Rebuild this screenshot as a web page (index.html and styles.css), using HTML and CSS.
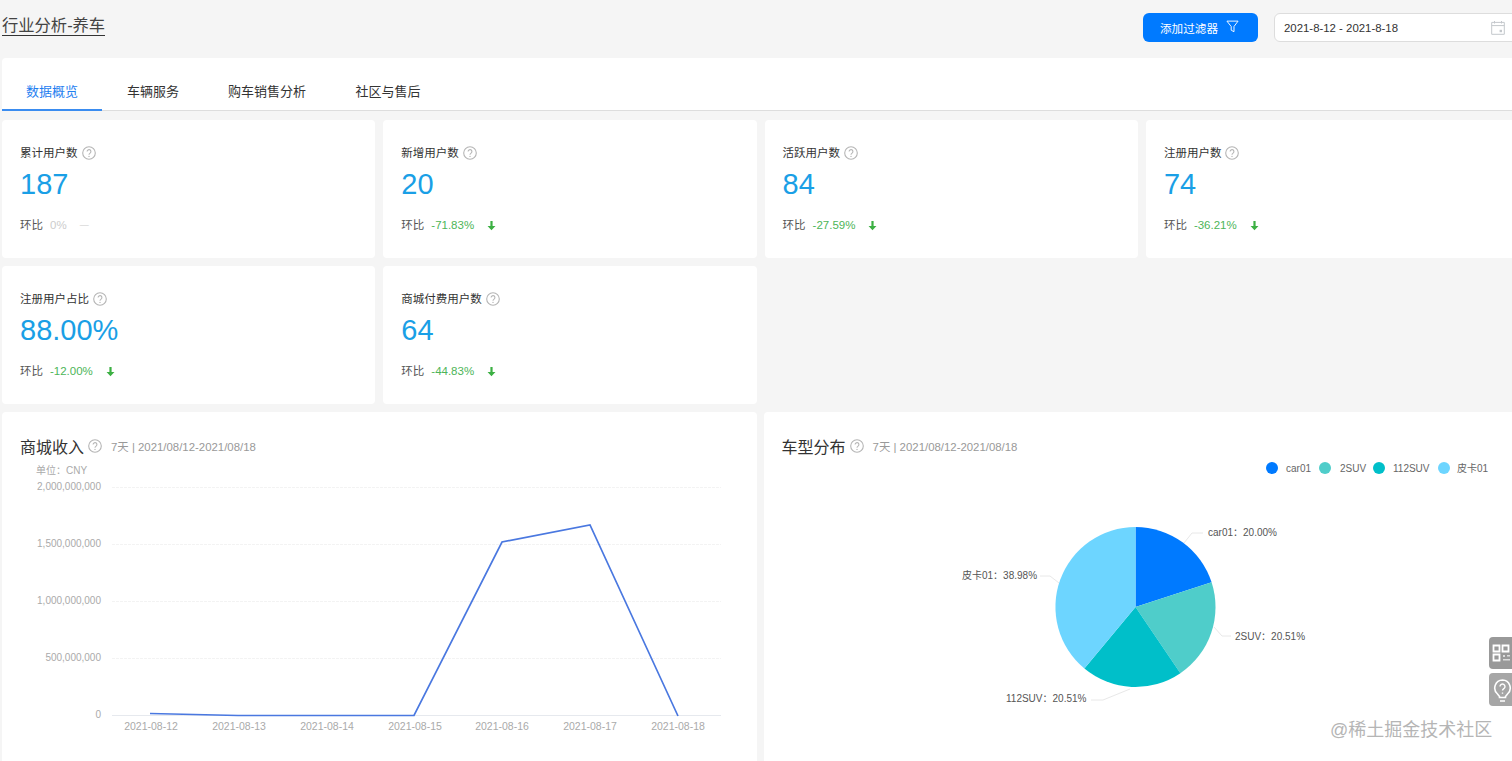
FILE: index.html
```html
<!DOCTYPE html>
<html lang="zh-CN">
<head>
<meta charset="utf-8">
<title>行业分析-养车</title>
<link rel="stylesheet" href="styles.css">
</head>
<body>
<svg class="defs" width="0" height="0" aria-hidden="true">
  <symbol id="q" viewBox="0 0 14 14">
    <circle cx="7" cy="7" r="6.3" fill="none" stroke="currentColor" stroke-width="1.100"/>
    <path d="M5.100 5.600a1.900 1.900 0 1 1 3 1.500c-.7.500-1.100.9-1.100 1.600" fill="none" stroke="currentColor" stroke-width="1.100"/>
    <circle cx="7" cy="10.400" r=".7" fill="currentColor"/>
  </symbol>
  <symbol id="down" viewBox="0 0 10 10">
    <path d="M4 1h2v4.400h2.600L5 9.400 1.400 5.400H4z" fill="currentColor"/>
  </symbol>
</svg>
<div class="page">
  <header class="top">
    <h1 class="title">行业分析-养车</h1>
    <div class="actions">
      <button class="filter-btn">添加过滤器
        <svg class="filter-icon" viewBox="0 0 14 14"><path d="M1 1.200h12L8.600 7v5.600L5.600 11V7z" fill="none" stroke="currentColor" stroke-width="1"/></svg>
      </button>
      <div class="date">
        <span>2021-8-12 - 2021-8-18</span>
        <svg class="cal" viewBox="0 0 14 15"><path d="M3.500 1v2.500M10.500 1v2.500M.7 2.400h12.600v11.900H.7zM.7 5.600h12.600" fill="none" stroke="currentColor" stroke-width="1"/><rect x="8.600" y="9.800" width="2.400" height="2.400" fill="currentColor"/></svg>
      </div>
    </div>
  </header>

  <nav class="tabs">
    <a class="tab active">数据概览</a>
    <a class="tab">车辆服务</a>
    <a class="tab">购车销售分析</a>
    <a class="tab">社区与售后</a>
  </nav>

  <main class="grid">
    <section class="card">
      <div class="label">累计用户数 <svg class="q"><use href="#q"/></svg></div>
      <div class="value">187</div>
      <div class="trend">环比<span class="flat">0%</span><span class="flat dash">—</span></div>
    </section>
    <section class="card">
      <div class="label">新增用户数 <svg class="q"><use href="#q"/></svg></div>
      <div class="value">20</div>
      <div class="trend">环比<span class="delta">-71.83%</span><svg class="down"><use href="#down"/></svg></div>
    </section>
    <section class="card">
      <div class="label">活跃用户数 <svg class="q"><use href="#q"/></svg></div>
      <div class="value">84</div>
      <div class="trend">环比<span class="delta">-27.59%</span><svg class="down"><use href="#down"/></svg></div>
    </section>
    <section class="card">
      <div class="label">注册用户数 <svg class="q"><use href="#q"/></svg></div>
      <div class="value">74</div>
      <div class="trend">环比<span class="delta">-36.21%</span><svg class="down"><use href="#down"/></svg></div>
    </section>
    <section class="card">
      <div class="label">注册用户占比 <svg class="q"><use href="#q"/></svg></div>
      <div class="value">88.00%</div>
      <div class="trend">环比<span class="delta">-12.00%</span><svg class="down"><use href="#down"/></svg></div>
    </section>
    <section class="card">
      <div class="label">商城付费用户数 <svg class="q"><use href="#q"/></svg></div>
      <div class="value">64</div>
      <div class="trend">环比<span class="delta">-44.83%</span><svg class="down"><use href="#down"/></svg></div>
    </section>

    <section class="panel panel-left">
      <div class="panel-head"><h2>商城收入</h2><svg class="q q-big"><use href="#q"/></svg><span class="sub">7天 | 2021/08/12-2021/08/18</span></div>
      <svg class="chart" viewBox="2 460 755 301">
        <text class="axis" x="36" y="474">单位：CNY</text>
        <g class="grid-lines">
          <path d="M112 487.500H721M112 544.500H721M112 601.500H721M112 658.500H721"/>
        </g>
        <path class="base" d="M112 715.500H721"/>
        <g class="axis end">
          <text x="101" y="490">2,000,000,000</text>
          <text x="101" y="547">1,500,000,000</text>
          <text x="101" y="604">1,000,000,000</text>
          <text x="101" y="661">500,000,000</text>
          <text x="101" y="718">0</text>
        </g>
        <g class="axis mid x-axis">
          <text x="151" y="730">2021-08-12</text>
          <text x="239" y="730">2021-08-13</text>
          <text x="327" y="730">2021-08-14</text>
          <text x="415" y="730">2021-08-15</text>
          <text x="502" y="730">2021-08-16</text>
          <text x="590" y="730">2021-08-17</text>
          <text x="678" y="730">2021-08-18</text>
        </g>
        <polyline class="line" points="150,713.500 238,715.500 326,715.500 414,715.500 502,542 590,525 678,716"/>
      </svg>
    </section>

    <section class="panel panel-right">
      <div class="panel-head"><h2>车型分布</h2><svg class="q q-big"><use href="#q"/></svg><span class="sub">7天 | 2021/08/12-2021/08/18</span></div>
      <svg class="chart" viewBox="764 460 756 301">
        <g class="legend">
          <circle cx="1272" cy="468" r="6" class="s1"/><text x="1286" y="471.500">car01</text>
          <circle cx="1325" cy="468" r="6" class="s2"/><text x="1340" y="471.500">2SUV</text>
          <circle cx="1379" cy="468" r="6" class="s3"/><text x="1393" y="471.500">112SUV</text>
          <circle cx="1444" cy="468" r="6" class="s4"/><text x="1457" y="471.500">皮卡01</text>
        </g>
        <path class="s1" d="M1135.500 607V527A80 80 0 0 1 1211.600 582.300Z"/>
        <path class="s2" d="M1135.500 607L1211.600 582.300A80 80 0 0 1 1180.400 673.200Z"/>
        <path class="s3" d="M1135.500 607L1180.400 673.200A80 80 0 0 1 1084.400 668.600Z"/>
        <path class="s4" d="M1135.500 607L1084.400 668.600A80 80 0 0 1 1135.500 527Z"/>
        <g class="leader">
          <path d="M1184 543L1192 533H1203"/>
          <path d="M1214 627L1222 636H1231"/>
          <path d="M1130 689L1103 700H1091"/>
          <path d="M1059 583L1050 576H1040"/>
        </g>
        <g class="pie-label">
          <text x="1208" y="536">car01：20.00%</text>
          <text x="1235" y="640">2SUV：20.51%</text>
          <text x="1006" y="702">112SUV：20.51%</text>
          <text x="962" y="579">皮卡01：38.98%</text>
        </g>
      </svg>
    </section>
  </main>
</div>

<aside class="float f1">
  <svg viewBox="0 0 23 23" width="23" height="23"><path d="M3.500 3.500h6v6h-6zM12.500 3.500h6v6h-6zM3.500 12.500h6v6h-6z" fill="none" stroke="#fff" stroke-width="1.800"/><path d="M13 13h2v2h-2zM17 13h3v1.500h-3zM13 17h7v1.500h-7z" fill="#ddd"/></svg>
</aside>
<aside class="float f2">
  <svg viewBox="0 0 23 26" width="23" height="26"><path d="M12.500 3a8 8 0 0 0-5 14l2 2.500v1h6v-1l2-2.500a8 8 0 0 0-5-14zM10 24h5" fill="none" stroke="#fff" stroke-width="1.600"/><path d="M10 9.500a2.500 2.500 0 1 1 3.800 2.100c-.9.600-1.300 1-1.300 2M12.500 15.500v1.200" fill="none" stroke="#fff" stroke-width="1.400"/></svg>
</aside>
<div class="watermark">@稀土掘金技术社区</div>
</body>
</html>
```
FILE: styles.css
```css
* { box-sizing: border-box; }
html, body { margin: 0; height: 761px; overflow: hidden; }
body {
  background: #f5f5f5;
  font-family: "Liberation Sans", "Noto Sans CJK SC", sans-serif;
  color: #333;
  position: relative;
}
.defs { position: absolute; }
.page { width: 1520px; padding-left: 2px; }

.top { height: 58px; display: flex; justify-content: space-between; align-items: flex-start; }
.title {
  margin: 14px 0 0;
  font-size: 16.300px;
  font-weight: 400;
  line-height: 22px;
  height: 22px;
  border-bottom: 1px solid #333;
  color: #444;
}
.actions { display: flex; gap: 16px; margin-top: 13px; }
.filter-btn {
  width: 115px;
  height: 29px;
  border: 0;
  border-radius: 6px;
  background: #007aff;
  color: #fff;
  font: 11.600px "Liberation Sans", "Noto Sans CJK SC", sans-serif;
  display: flex;
  align-items: center;
  padding: 0 0 0 17px;
  gap: 8px;
}
.filter-icon { width: 13px; height: 13px; margin-top: -3px; }
.date {
  width: 246px;
  height: 29px;
  border: 1px solid #ddd;
  border-radius: 6px;
  background: #fff;
  font-size: 11.400px;
  color: #333;
  display: flex;
  align-items: center;
  justify-content: space-between;
  padding: 0 14px 0 9px;
}
.cal { width: 14px; height: 15px; color: #c4c8cc; }

.tabs {
  height: 53px;
  background: #fff;
  border-bottom: 1px solid #ddd;
  display: flex;
  align-items: flex-start;
  gap: 1px;
  border-radius: 4px 4px 0 0;
}
.tab {
  height: 52px;
  padding-top: 24px;
  font-size: 13px;
  line-height: 20px;
  color: #333;
  text-align: center;
}
.tab:nth-child(1) { width: 100px; }
.tab:nth-child(2) { width: 100px; }
.tab:nth-child(3) { width: 126px; }
.tab:nth-child(4) { width: 114px; }
.tab.active { color: #1f80f0; border-bottom: 2px solid #3a8cf0; height: 53px; }

.grid {
  margin-top: 9px;
  display: grid;
  grid-template-columns: repeat(4, 373.300px);
  grid-auto-rows: 138px;
  gap: 8px;
}
.card {
  background: #fff;
  border-radius: 4px;
  padding: 24px 18px 0;
  display: flex;
  flex-direction: column;
}
.card:nth-child(5) { grid-column: 1; }
.label { font-size: 11.500px; line-height: 18px; height: 18px; color: #333; display: flex; align-items: center; gap: 4px; }
.q { width: 14px; height: 14px; color: #b5b5b5; flex: none; }
.value { font-size: 29px; line-height: 34px; margin-top: 5px; color: #1a9fe6; }
.trend { margin-top: 15px; font-size: 11.500px; line-height: 18px; color: #555; display: flex; align-items: center; }
.delta { margin-left: 7px; color: #4db558; }
.flat { margin-left: 7px; color: #ccc; }
.flat.dash { margin-left: 13px; font-size: 9px; }
.down { width: 11px; height: 11px; margin-left: 12px; color: #3cb043; }

.panel { height: 360px; background: #fff; border-radius: 4px; }
.panel-left { grid-column: 1 / span 2; width: 755px; }
.panel-right { grid-column: 3 / span 2; width: 756px; margin-left: -1px; }
.panel-head { height: 48px; padding: 19px 0 0 18px; display: flex; align-items: center; }
.panel-head h2 { margin: 0; font-size: 16px; font-weight: 400; color: #333; }
.q-big { margin-left: 4px; }
.sub { margin-left: 9px; font-size: 11.400px; color: #999; }
.chart { display: block; width: 100%; height: 301px; }
.chart text { font-family: "Liberation Sans", "Noto Sans CJK SC", sans-serif; font-size: 10px; }
.chart .x-axis text { font-size: 10.500px; }
.axis { fill: #aaa; }
.axis.end { text-anchor: end; }
.axis.mid { text-anchor: middle; }
.grid-lines path { stroke: #f3f3f3; stroke-dasharray: 3 1; fill: none; }
.base { stroke: #e6e9ee; fill: none; }
.line { fill: none; stroke: #4a78e0; stroke-width: 1.700; }
.legend text { fill: #666; }
.s1 { fill: #007aff; }
.s2 { fill: #4fcdca; }
.s3 { fill: #00bfc9; }
.s4 { fill: #6dd5ff; }
.leader path { fill: none; stroke: #e8e8e8; }
.pie-label text { fill: #555; }

.float {
  position: absolute;
  left: 1489px;
  width: 30px;
  background: #999;
  border-radius: 4px;
  display: flex;
  align-items: center;
  padding-left: 1px;
}
.f1 { top: 637px; height: 32px; }
.f2 { top: 673px; height: 33px; background: #a6a6a6; }
.watermark {
  position: absolute;
  left: 1330px;
  top: 718px;
  font-size: 18px;
  line-height: 24px;
  color: #b5b5b5;
}
```
